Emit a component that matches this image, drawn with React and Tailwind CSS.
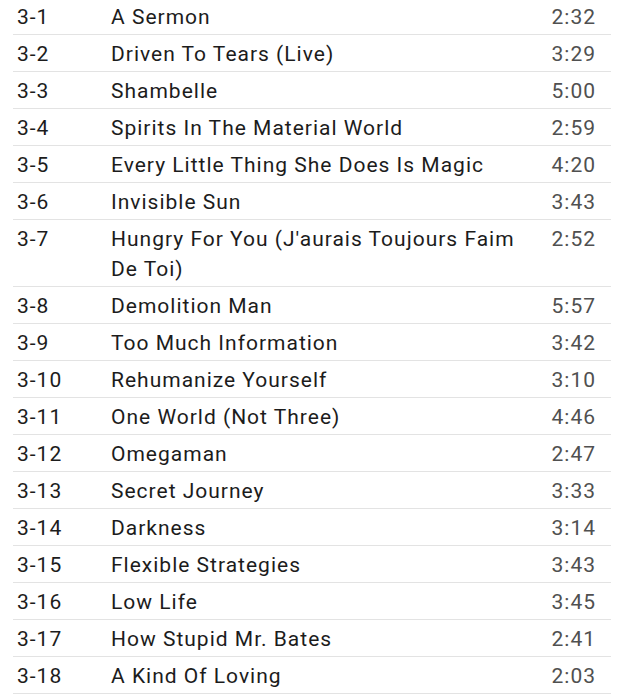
import React from 'react';

const tracks = [
  ['3-1', 'A Sermon', '2:32'],
  ['3-2', 'Driven To Tears (Live)', '3:29'],
  ['3-3', 'Shambelle', '5:00'],
  ['3-4', 'Spirits In The Material World', '2:59'],
  ['3-5', 'Every Little Thing She Does Is Magic', '4:20'],
  ['3-6', 'Invisible Sun', '3:43'],
  ['3-7', "Hungry For You (J'aurais Toujours Faim De Toi)", '2:52'],
  ['3-8', 'Demolition Man', '5:57'],
  ['3-9', 'Too Much Information', '3:42'],
  ['3-10', 'Rehumanize Yourself', '3:10'],
  ['3-11', 'One World (Not Three)', '4:46'],
  ['3-12', 'Omegaman', '2:47'],
  ['3-13', 'Secret Journey', '3:33'],
  ['3-14', 'Darkness', '3:14'],
  ['3-15', 'Flexible Strategies', '3:43'],
  ['3-16', 'Low Life', '3:45'],
  ['3-17', 'How Stupid Mr. Bates', '2:41'],
  ['3-18', 'A Kind Of Loving', '2:03'],
];

const App = () => {
  return (
    <div className="w-[625px] h-[700px] overflow-hidden bg-white font-['Roboto',sans-serif]">
      <div className="ml-[13px] mt-[-2px] w-[598px]">
        {tracks.map(([num, title, time]) => (
          <div
            key={num}
            className="grid grid-cols-[98px_1fr_84px] border-b border-[#e3e3e3] pt-[4px] pb-[2px] text-[21px] leading-[30px] tracking-[1px]"
          >
            <div className="pl-[4px] text-[#1c1c1c]">{num}</div>
            <div className="pr-[4px] text-[#1c1c1c]">{title}</div>
            <div className="pr-[15px] text-right text-[#505050]">{time}</div>
          </div>
        ))}
      </div>
    </div>
  );
};

export default App;
